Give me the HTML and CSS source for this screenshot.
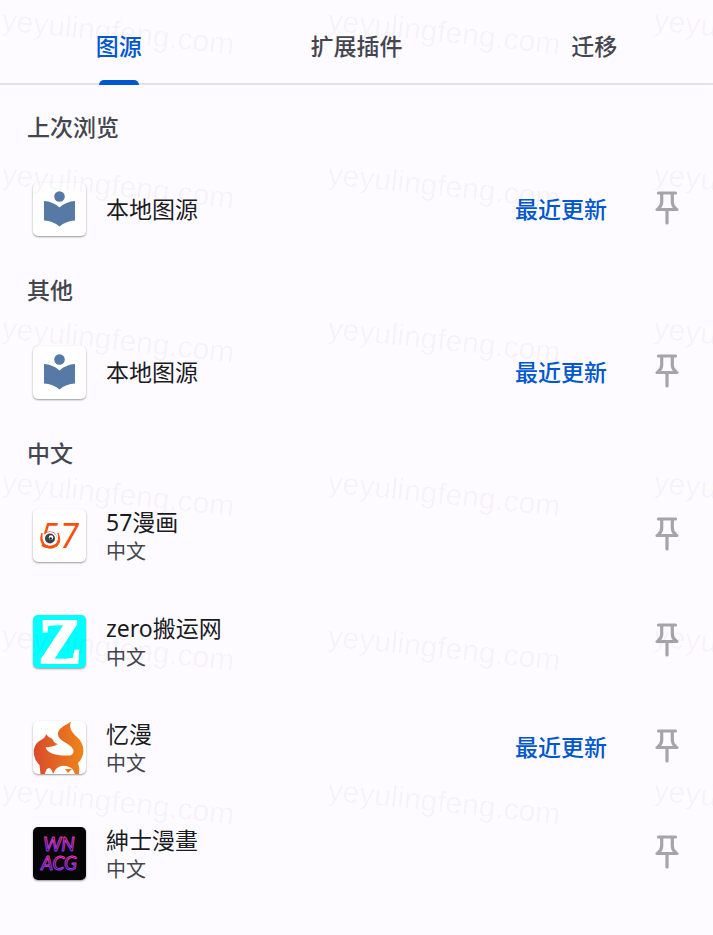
FILE: index.html
```html
<!DOCTYPE html>
<html lang="zh-CN">
<head>
  <meta charset="utf-8">
  <meta name="viewport" content="width=device-width, initial-scale=1">
  <title>图源</title>
  <link rel="stylesheet" href="styles.css">
</head>
<body>
  <svg class="defs" aria-hidden="true">
    <symbol id="pin" viewBox="0 0 24 34">
      <path d="M3.500 2h17M6.700 2.500v8.500q0 4-3.400 6.500M17.300 2.500v8.500q0 4 3.400 6.500M2 18.500h20M12 19v13" fill="none" stroke="#a5a4a9" stroke-width="3.200" stroke-linecap="round"/>
    </symbol>
    <symbol id="reader" viewBox="0 0 53 53">
      <circle cx="26.500" cy="13.500" r="5.300" fill="#5679a5"/>
      <path d="M26.500 24.500Q20 18.500 11 18v19.500Q20 38 26.500 43.500 33 38 42 37.500V18Q33 18.500 26.500 24.500Z" fill="#5679a5"/>
    </symbol>
  </svg>

  <nav class="tabs">
    <button type="button" class="tab active">图源</button>
    <button type="button" class="tab">扩展插件</button>
    <button type="button" class="tab">迁移</button>
  </nav>

  <main class="sources">
    <h2>上次浏览</h2>
    <div class="source">
      <svg class="logo" viewBox="0 0 53 53"><use href="#reader"/></svg>
      <div class="info"><p class="name">本地图源</p></div>
      <button type="button" class="latest">最近更新</button>
      <button type="button" class="pin" aria-label="置顶"><svg><use href="#pin"/></svg></button>
    </div>

    <h2>其他</h2>
    <div class="source">
      <svg class="logo" viewBox="0 0 53 53"><use href="#reader"/></svg>
      <div class="info"><p class="name">本地图源</p></div>
      <button type="button" class="latest">最近更新</button>
      <button type="button" class="pin" aria-label="置顶"><svg><use href="#pin"/></svg></button>
    </div>

    <h2>中文</h2>
    <div class="source">
      <svg class="logo" viewBox="0 0 53 53">
        <text class="logo-57" x="7" y="39">57</text>
        <circle cx="17" cy="30" r="7" fill="#fff"/>
        <path d="M9 24Q6 31 10 36 16 42 24 37 29 32 25 24 27 32 22 36 16 39 11 35 8 30 9 24Z" fill="#f4500f" stroke="#f4500f"/>
        <circle cx="17" cy="29.500" r="5" fill="#39424a"/>
        <circle cx="18" cy="28.500" r="2.200" fill="#fff"/>
        <circle cx="17.700" cy="29.500" r="1.200" fill="#222"/>
      </svg>
      <div class="info"><p class="name">57漫画</p><p class="lang">中文</p></div>
      <button type="button" class="pin" aria-label="置顶"><svg><use href="#pin"/></svg></button>
    </div>
    <div class="source">
      <svg class="logo cyan" viewBox="0 0 53 53">
        <text class="logo-z" x="27" y="48">Z</text>
      </svg>
      <div class="info"><p class="name">zero搬运网</p><p class="lang">中文</p></div>
      <button type="button" class="pin" aria-label="置顶"><svg><use href="#pin"/></svg></button>
    </div>
    <div class="source">
      <svg class="logo" viewBox="0 0 53 53">
        <defs>
          <linearGradient id="fox">
            <stop offset="0" stop-color="#d94a2b"/>
            <stop offset="1" stop-color="#ef8419"/>
          </linearGradient>
        </defs>
        <path d="M38 0.500C34 4 26 6 25 12C24 20 36 21 40 28C42 33 38 35 34 34.500C26 35 14 33 12.500 26Q19 27 25 23Q21 22 20 19C18 16 15 17 13.500 13Q12 17 8 19C2 22 0 28 1 34Q2 40 6.500 44L7.500 53H12Q13 47 16 47Q19 48 20 53Q23 46 28 45Q32 44 36 46Q40 47 42 53H46Q47 47 45 42C51 36 52 28 48 21C45 15 34 11 38 0.500Z" fill="url(#fox)"/>
        <path d="M32 48h7l-4 4Z" fill="#ec7a1c"/>
      </svg>
      <div class="info"><p class="name">忆漫</p><p class="lang">中文</p></div>
      <button type="button" class="latest">最近更新</button>
      <button type="button" class="pin" aria-label="置顶"><svg><use href="#pin"/></svg></button>
    </div>
    <div class="source">
      <svg class="logo black" viewBox="0 0 53 53">
        <defs>
          <linearGradient id="neon" x1="0" y1="0" x2="0" y2="1">
            <stop offset="0.200" stop-color="#ff35b8"/>
            <stop offset="0.800" stop-color="#9a35ff"/>
          </linearGradient>
        </defs>
        <text class="logo-wn" x="26" y="24">WN</text>
        <text class="logo-wn" x="26" y="43">ACG</text>
      </svg>
      <div class="info"><p class="name" lang="zh-TW">紳士漫畫</p><p class="lang">中文</p></div>
      <button type="button" class="pin" aria-label="置顶"><svg><use href="#pin"/></svg></button>
    </div>
  </main>

  <div class="watermark" aria-hidden="true">
    <span>yeyulingfeng.com</span><span>yeyulingfeng.com</span><span>yeyulingfeng.com</span>
    <span>yeyulingfeng.com</span><span>yeyulingfeng.com</span><span>yeyulingfeng.com</span>
    <span>yeyulingfeng.com</span><span>yeyulingfeng.com</span><span>yeyulingfeng.com</span>
    <span>yeyulingfeng.com</span><span>yeyulingfeng.com</span><span>yeyulingfeng.com</span>
    <span>yeyulingfeng.com</span><span>yeyulingfeng.com</span><span>yeyulingfeng.com</span>
    <span>yeyulingfeng.com</span><span>yeyulingfeng.com</span><span>yeyulingfeng.com</span>
  </div>
</body>
</html>
```
FILE: styles.css
```css
* {
  box-sizing: border-box;
}

body {
  position: relative;
  margin: 0;
  min-height: 100vh;
  background-color: #fdfbff;
  color: #1b1b1f;
  font-family: "Noto Sans", "Noto Sans CJK SC", sans-serif;
  font-size: 23px;
}

button {
  padding: 0;
  border: none;
  background: none;
  font: inherit;
  cursor: pointer;
}

h2, p {
  margin: 0;
}

.defs {
  position: absolute;
  width: 0;
  height: 0;
}

.tabs {
  display: flex;
  height: 85px;
  border-bottom: 2px solid #dfe1ec;
}

.tab {
  position: relative;
  flex: 1;
  padding-top: 8px;
  color: #44464f;
  font-weight: 500;
  line-height: 32px;
}

.tab.active {
  color: #0057ce;
}

.tab.active::after {
  content: "";
  position: absolute;
  left: 50%;
  bottom: -2px;
  width: 40px;
  height: 5px;
  margin-left: -20px;
  border-radius: 5px 5px 0 0;
  background-color: #0057ce;
}

.sources {
  padding-top: 14px;
}

h2 {
  padding: 0 27px;
  color: #44464f;
  font-size: 23px;
  font-weight: 500;
  line-height: 57px;
}

.source {
  display: flex;
  align-items: center;
  height: 106px;
  padding: 0 34px 0 33px;
}

.logo {
  flex: none;
  width: 53px;
  height: 53px;
  border-radius: 5px;
  background-color: #fff;
  box-shadow: 0 1px 2px rgba(0, 0, 0, 0.4);
}

.logo.cyan {
  background-color: #00ffff;
}

.logo.black {
  background-color: #050505;
}

.logo-57 {
  fill: #f4500f;
  font: italic 34px Lato, sans-serif;
}

.logo-z {
  fill: #fff;
  stroke: #fff;
  stroke-width: 2px;
  font: bold 64px "Liberation Serif", serif;
  text-anchor: middle;
}

.logo-wn {
  fill: none;
  stroke: url(#neon);
  stroke-width: 1px;
  stroke-linejoin: round;
  font: italic 19px Lato, sans-serif;
  text-anchor: middle;
}

.info {
  flex: 1;
  padding-left: 20px;
}

.name {
  line-height: 32px;
}

.lang {
  color: #44464f;
  font-size: 20px;
  line-height: 27px;
}

.latest {
  margin-right: 48px;
  color: #0057ce;
  font-weight: 500;
  line-height: 32px;
}

.pin {
  flex: none;
}

.pin svg {
  display: block;
  width: 24px;
  height: 34px;
  margin-bottom: 2px;
}

.watermark {
  position: absolute;
  inset: 0;
  display: grid;
  grid-template-columns: repeat(3, 326px);
  grid-auto-rows: 154px;
  padding-left: 2px;
  overflow: hidden;
  color: rgba(0, 0, 0, 0.04);
  font-family: "Liberation Sans", sans-serif;
  font-size: 30px;
  line-height: 40px;
  pointer-events: none;
}

.watermark span {
  justify-self: start;
  height: 40px;
  transform: rotate(6deg);
  transform-origin: left center;
}
```
